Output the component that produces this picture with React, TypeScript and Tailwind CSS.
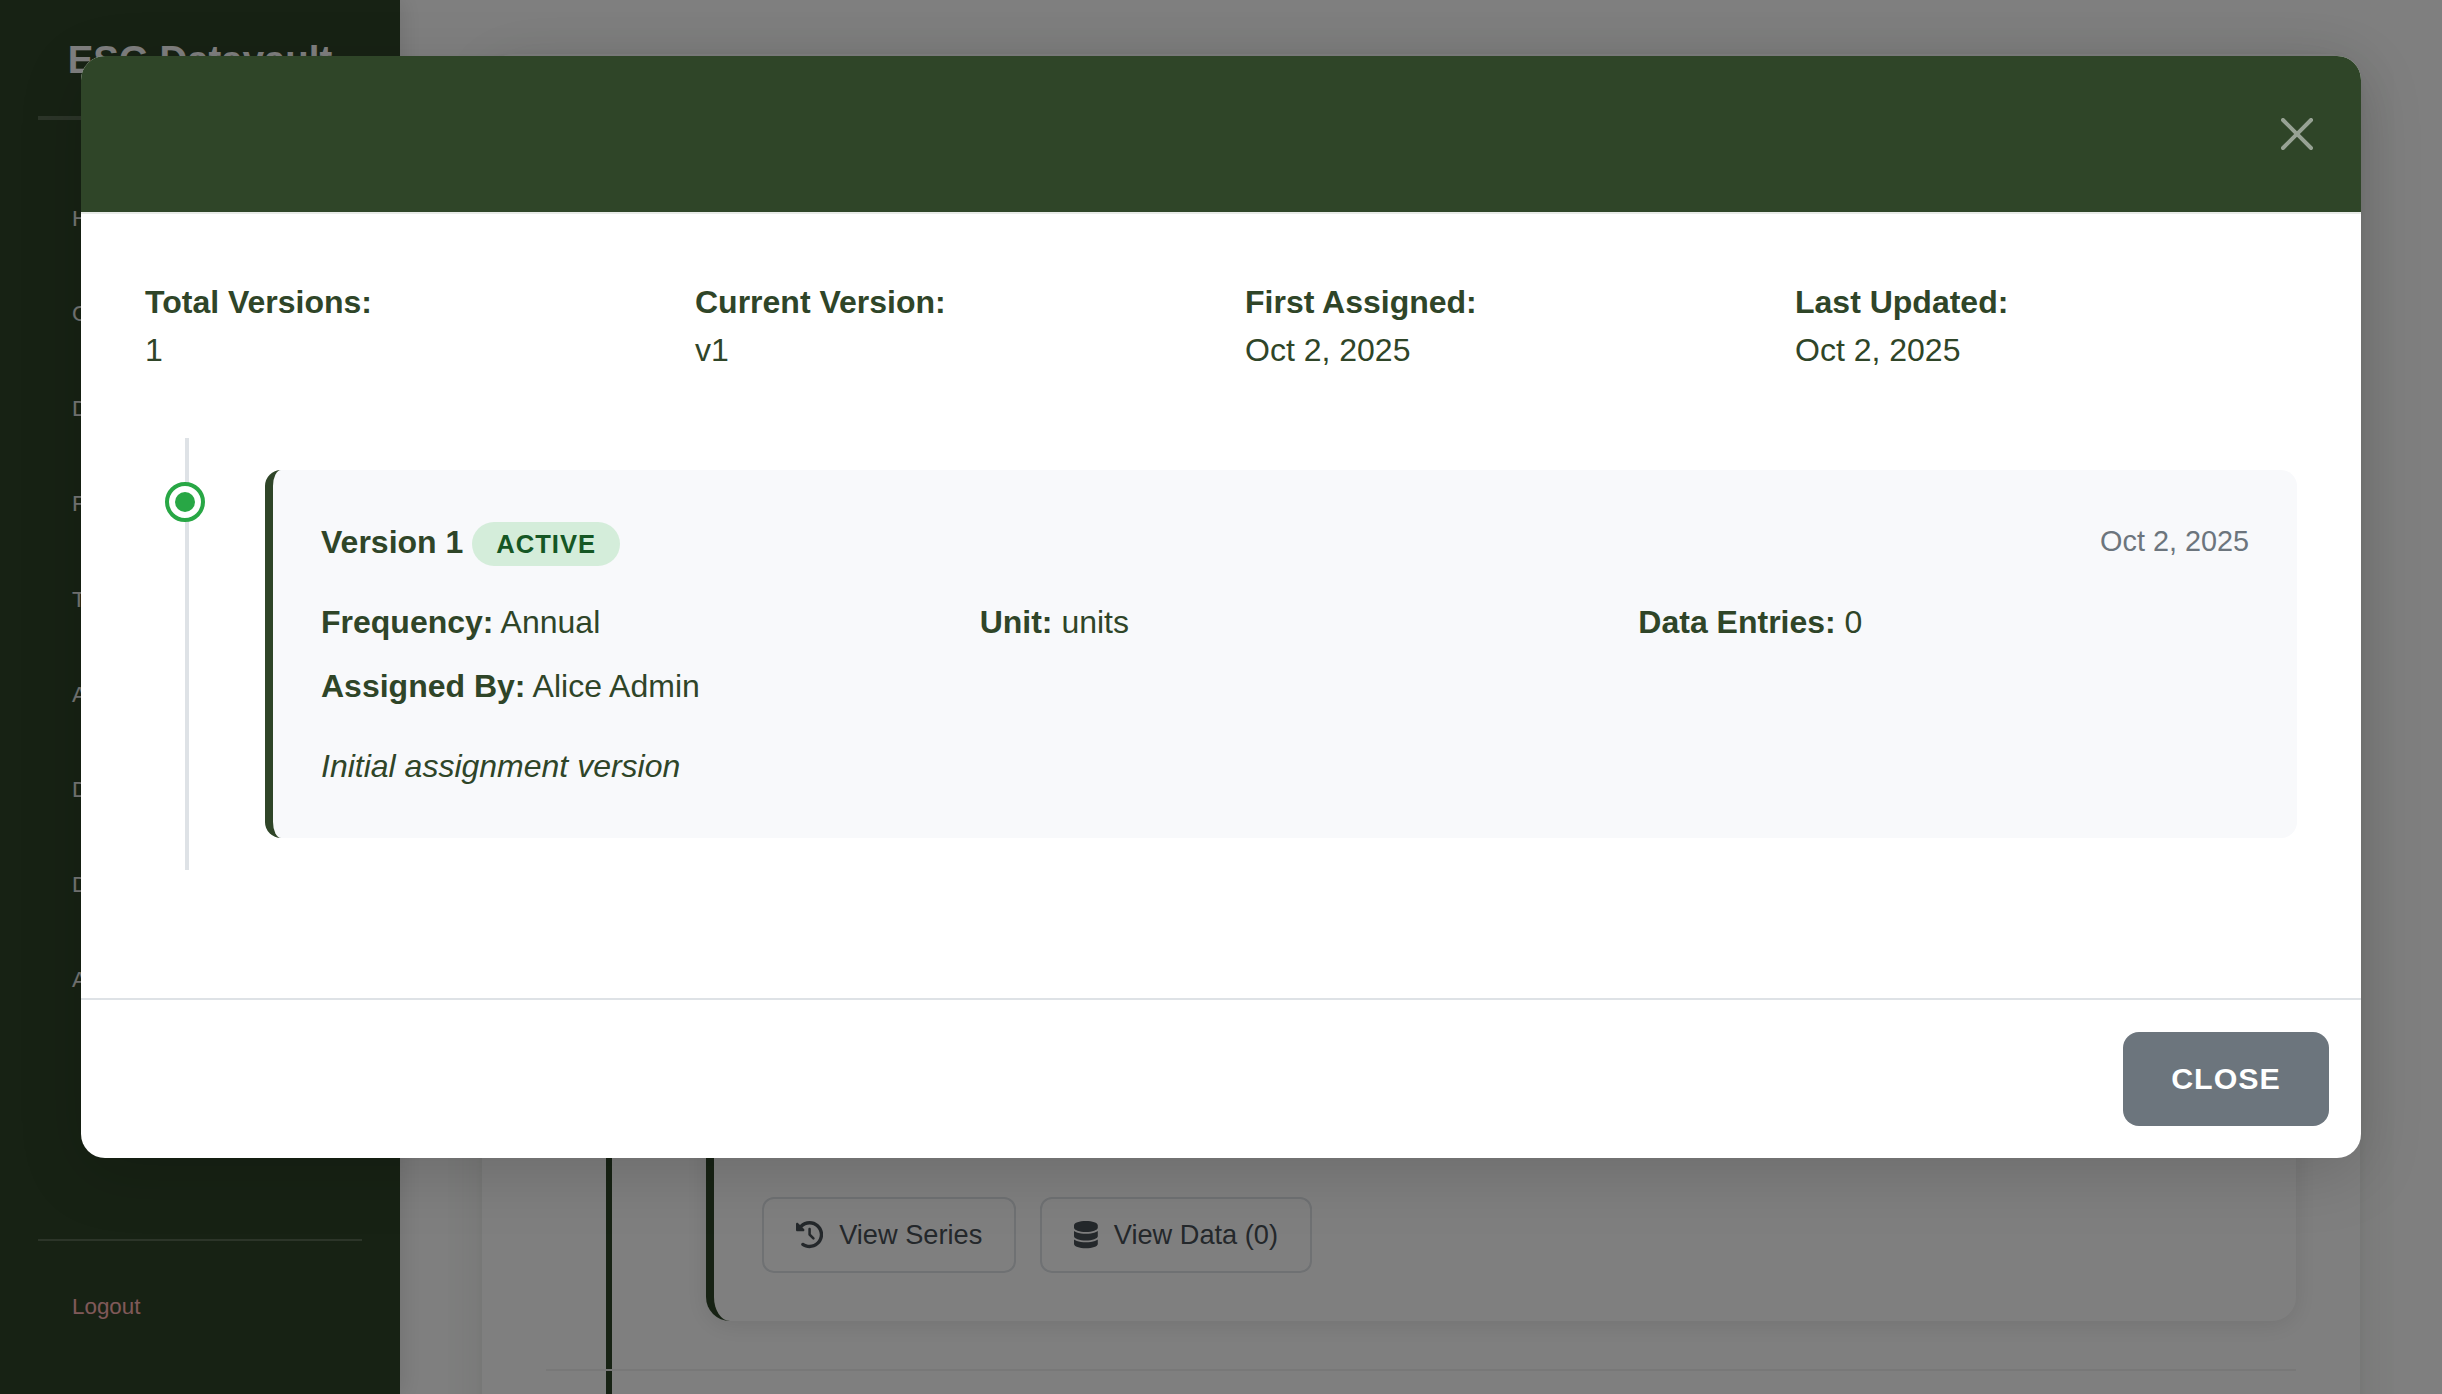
import { FaDatabase } from "react-icons/fa6";

const navItems = [
  "Home",
  "Config",
  "Data Points",
  "Frameworks",
  "Topics",
  "Assignments",
  "Data Review",
  "Documents",
  "Audit Log",
];

const summary = [
  ["Total Versions:", "1"],
  ["Current Version:", "v1"],
  ["First Assigned:", "Oct 2, 2025"],
  ["Last Updated:", "Oct 2, 2025"],
];

const details = [
  ["Frequency:", "Annual"],
  ["Unit:", "units"],
  ["Data Entries:", "0"],
  ["Assigned By:", "Alice Admin"],
];

function HistoryIcon() {
  return (
    <svg viewBox="0 0 512 512" className="size-[27.2px] fill-current">
      <path d="M75 75L41 41C25.9 25.9 0 36.6 0 57.9V168c0 13.3 10.7 24 24 24H134.1c21.4 0 32.1-25.9 17-41l-30.8-30.8C155 85.5 203 64 256 64c106 0 192 86 192 192s-86 192-192 192c-40.8 0-78.6-12.7-109.7-34.4c-14.5-10.1-34.4-6.6-44.6 7.9s-6.6 34.4 7.9 44.6C151.2 495 201.7 512 256 512c141.4 0 256-114.6 256-256S397.4 0 256 0C185.3 0 121.3 28.7 75 75zm181 53c-13.3 0-24 10.7-24 24V256c0 6.4 2.5 12.5 7 17l72 72c9.4 9.4 24.6 9.4 33.9 0s9.4-24.6 0-33.9l-65-65V152c0-13.3-10.7-24-24-24z" />
    </svg>
  );
}

function Sidebar() {
  return (
    <aside className="z-10 flex w-[400px] shrink-0 flex-col bg-[#2f4528] px-[38px] shadow-[4px_0_20px_rgba(0,0,0,0.1)]">
      <div className="flex h-[120px] items-center justify-center border-b-4 border-white/20 pt-[4px]">
        <span className="text-[38.4px] font-bold whitespace-nowrap text-white">ESG Datavault</span>
      </div>
      <nav className="flex flex-1 flex-col pt-[51px]">
        {navItems.map((item) => (
          <a key={item} className="flex h-[95.2px] shrink-0 items-center pl-[34px] text-[22.4px] text-white/90">
            {item}
          </a>
        ))}
      </nav>
      <div className="h-[155px] border-t-2 border-white/20 pt-[49px] pl-[34px] text-[22.4px] leading-[34px] text-[#ffb3b3]">
        Logout
      </div>
    </aside>
  );
}

function Background() {
  return (
    <div className="flex h-full">
      <Sidebar />
      <main className="flex-1 bg-white px-[48px]">
        <div className="h-full overflow-hidden px-[34px] pt-[54px]">
          <section className="flex h-[1600px] rounded-[32px] bg-white px-[64px] shadow-[0_2px_8px_rgba(0,0,0,0.06),0_8px_64px_rgba(47,69,40,0.1)]">
            <div className="flex w-full pt-[128px]">
              <div className="ml-[60px] w-[6px] shrink-0 bg-[#2f4528]" />
              <div className="-ml-[66px] flex flex-1 flex-col">
                <article className="ml-[160px] flex h-[1139px] items-end rounded-[24px] border-l-8 border-[#2f4528] bg-white pb-[48px] pl-[48px] shadow-[0_4px_24px_rgba(0,0,0,0.1)]">
                  <div className="flex gap-[24px] text-[27.2px] text-[#495057]">
                    <button className="flex h-[76px] w-[254px] items-center gap-[16px] rounded-[12px] border-2 border-[#dee2e6] pl-[32px] whitespace-nowrap">
                      <HistoryIcon />
                      View Series
                    </button>
                    <button className="flex h-[76px] w-[272px] items-center gap-[16px] rounded-[12px] border-2 border-[#dee2e6] pl-[32px] whitespace-nowrap">
                      <FaDatabase className="h-[27.2px] w-[23.8px]" />
                      View Data (0)
                    </button>
                  </div>
                </article>
                <div className="mt-[48px] h-[2px] bg-[#f0f0f0]" />
              </div>
            </div>
          </section>
        </div>
      </main>
    </div>
  );
}

function VersionCard() {
  return (
    <div className="rounded-[16px] border-l-8 border-[#2f4528] bg-[#f8f9fb] p-[48px]">
      <div className="mb-[32px] flex h-[48px] justify-between">
        <div>
          <strong>Version 1</strong>{" "}
          <span className="inline-block h-[44px] rounded-[24px] bg-[#d4edda] px-[24px] align-baseline text-[25.6px] leading-[44px] font-bold tracking-[1px] text-[#155724]">
            ACTIVE
          </span>
        </div>
        <span className="text-[28.8px] leading-[46px] text-[#6c757d]">Oct 2, 2025</span>
      </div>
      <div className="grid grid-cols-3 gap-x-[48px] gap-y-[16px]">
        {details.map(([label, value]) => (
          <div key={label}>
            <strong>{label}</strong> {value}
          </div>
        ))}
      </div>
      <p className="mt-[32px] italic">Initial assignment version</p>
    </div>
  );
}

function Modal() {
  return (
    <div className="flex h-[1102px] w-[2280px] flex-col overflow-hidden rounded-[24px] bg-white text-[32px] leading-[48px] text-[#2f4528] shadow-[0_16px_64px_rgba(0,0,0,0.15)]">
      <header className="flex h-[158px] shrink-0 items-center justify-end border-b-2 border-[#e8ebe8] bg-[#2f4528] bg-clip-padding pr-[48px]">
        <svg viewBox="0 0 16 16" className="size-[32px] fill-white opacity-50">
          <path d="M.293.293a1 1 0 0 1 1.414 0L8 6.586 14.293.293a1 1 0 1 1 1.414 1.414L9.414 8l6.293 6.293a1 1 0 0 1-1.414 1.414L8 9.414l-6.293 6.293a1 1 0 0 1-1.414-1.414L6.586 8 .293 1.707a1 1 0 0 1 0-1.414z" />
        </svg>
      </header>
      <div className="flex-1 p-[64px]">
        <div className="grid grid-cols-4 gap-x-[48px]">
          {summary.map(([label, value]) => (
            <div key={label}>
              <strong className="block">{label}</strong>
              {value}
            </div>
          ))}
        </div>
        <div className="relative mt-[64px] py-[32px] pl-[120px]">
          <div className="absolute top-0 bottom-0 left-[40px] w-[4px] bg-[#dee2e6]" />
          <div className="absolute top-[44px] left-[20px] flex size-[40px] items-center justify-center rounded-full border-4 border-[#28a745] bg-white">
            <div className="size-[20px] rounded-full bg-[#28a745]" />
          </div>
          <VersionCard />
        </div>
      </div>
      <footer className="flex h-[160px] shrink-0 items-center justify-end border-t-2 border-[#dee2e6] pr-[32px]">
        <button className="h-[94px] w-[206px] rounded-[16px] bg-[#6c757d] pb-[3px] text-[30.4px] font-bold tracking-[1px] text-white">
          CLOSE
        </button>
      </footer>
    </div>
  );
}

export default function App() {
  return (
    <div className="relative h-[1394px] w-[2442px] overflow-hidden font-['Liberation_Sans',Arial,sans-serif]">
      <Background />
      <div className="absolute inset-0 z-20 flex items-start justify-center bg-black/50 pt-[56px]">
        <Modal />
      </div>
    </div>
  );
}
